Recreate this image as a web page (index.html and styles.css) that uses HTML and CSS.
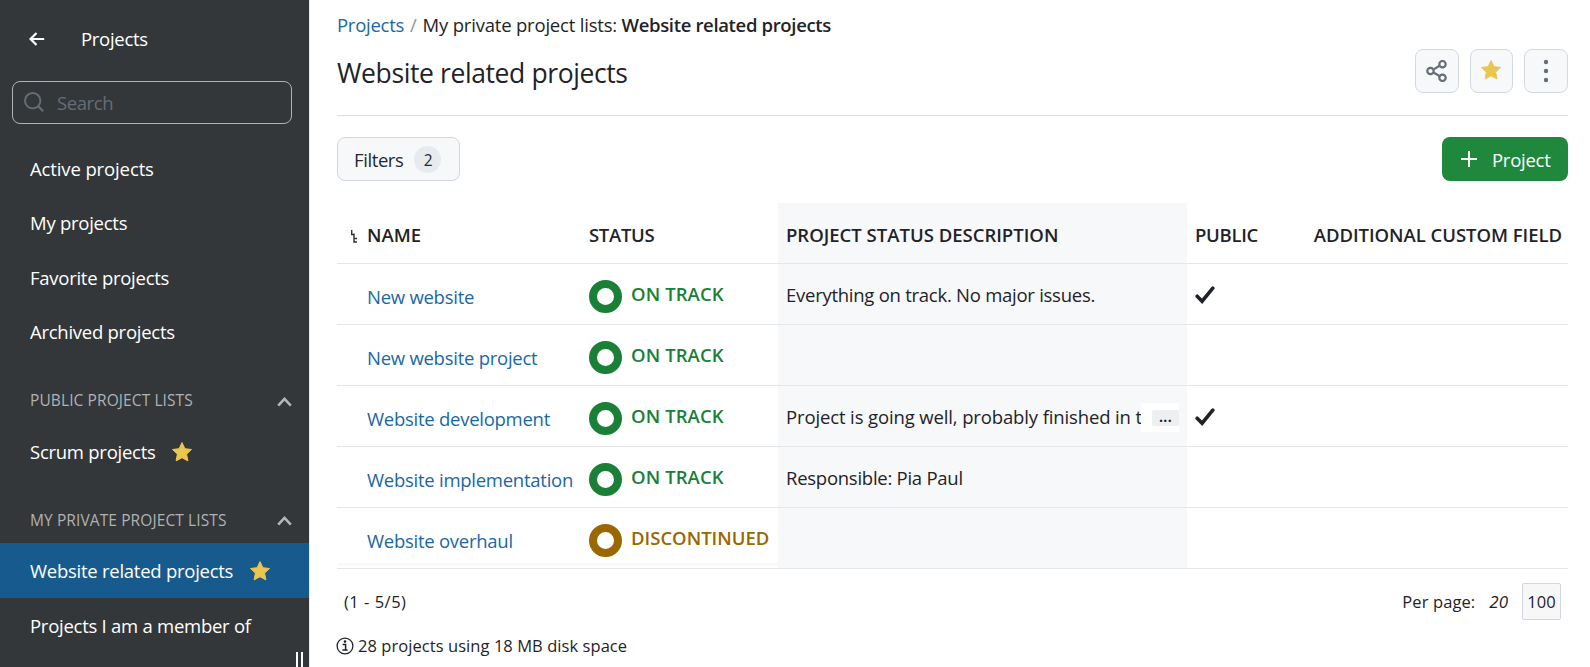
FILE: index.html
```html
<!DOCTYPE html>
<html lang="en">
<head>
<meta charset="utf-8">
<title>Website related projects</title>
<link rel="stylesheet" href="styles.css">
</head>
<body>
<svg class="defs" width="0" height="0" aria-hidden="true">
  <symbol id="star" viewBox="0 0 20 20"><path d="M10 .6l2.9 6.1 6.6.8-4.9 4.6 1.3 6.8-5.9-3.2-5.9 3.2 1.3-6.8L.5 7.5l6.6-.8z" fill="#eac54f" stroke="#eac54f" stroke-width="1" stroke-linejoin="round"/></symbol>
  <symbol id="chevron" viewBox="0 0 15 10"><path d="M1.2 8.7l6.3-6.8 6.3 6.8" fill="none" stroke="#b5b7b8" stroke-width="2.5"/></symbol>
  <symbol id="check" viewBox="0 0 20 18"><path d="M2.2 10.2l4.9 5L17.8 2.2" fill="none" stroke="#1f2328" stroke-width="3.6" stroke-linecap="round"/></symbol>
</svg>
<div class="app">
  <aside class="sidebar">
    <header class="side-head">
      <svg class="back" viewBox="0 0 16 14"><path d="M15.2 7H1.5M7.5 1L1.5 7l6 6" fill="none" stroke="#fff" stroke-width="2.2"/></svg>
      <span>Projects</span>
    </header>
    <label class="search">
      <svg viewBox="0 0 20 20"><circle cx="8.7" cy="8.7" r="7.7" fill="none" stroke="#656d76" stroke-width="1.9"/><path d="M14.2 14.2l5 5" stroke="#656d76" stroke-width="2.2"/></svg>
      <span>Search</span>
    </label>
    <nav class="menu">
      <a class="item">Active projects</a>
      <a class="item">My projects</a>
      <a class="item">Favorite projects</a>
      <a class="item">Archived projects</a>
      <div class="group">PUBLIC PROJECT LISTS<svg><use href="#chevron"/></svg></div>
      <a class="item">Scrum projects<svg class="star"><use href="#star"/></svg></a>
      <div class="group second">MY PRIVATE PROJECT LISTS<svg><use href="#chevron"/></svg></div>
      <a class="item active">Website related projects<svg class="star"><use href="#star"/></svg></a>
      <a class="item last">Projects I am a member of</a>
    </nav>
    <div class="resizer"></div>
  </aside>
  <main class="main">
    <div class="crumbs"><a>Projects</a><i>/</i><span>My private project lists: <b>Website related projects</b></span></div>
    <div class="title-row">
      <h1>Website related projects</h1>
      <div class="actions">
        <span class="btn"><svg width="22" height="22" viewBox="0 0 22 22" fill="none" stroke="#656d76" stroke-width="2.2"><path d="M8 9.1l6-3.6M8 12.8l6 3.6"/><circle cx="4.5" cy="11" r="3.2"/><circle cx="16.5" cy="4.2" r="3.2"/><circle cx="16.5" cy="17.8" r="3.2"/></svg></span>
        <span class="btn mid"><svg class="star"><use href="#star"/></svg></span>
        <span class="btn"><svg width="6" height="24" viewBox="0 0 6 24" fill="#656d76"><circle cx="3" cy="3" r="2.2"/><circle cx="3" cy="12" r="2.2"/><circle cx="3" cy="21" r="2.2"/></svg></span>
      </div>
    </div>
    <div class="toolbar">
      <span class="filters">Filters<em>2</em></span>
      <span class="create"><svg width="16" height="16" viewBox="0 0 16 16"><path d="M8 0v16M0 8h16" stroke="#fff" stroke-width="2"/></svg>Project</span>
    </div>
    <section class="table">
      <div class="row head">
        <span class="name"><svg class="tree" width="6" height="13" viewBox="0 0 6 13"><path d="M.7 0v4.5H3M3 3.5v8.5H6M3 8.5H6" fill="none" stroke="#2c3136" stroke-width="1.4"/></svg>NAME</span>
        <span>STATUS</span><span class="desc">PROJECT STATUS DESCRIPTION</span><span>PUBLIC</span><span class="field">ADDITIONAL CUSTOM FIELD</span>
      </div>
      <div class="row"><a class="name">New website</a><span class="status"><i></i>ON TRACK</span><span class="desc">Everything on track. No major issues.</span><span><svg class="check"><use href="#check"/></svg></span><span></span></div>
      <div class="row"><a class="name">New website project</a><span class="status"><i></i>ON TRACK</span><span class="desc"></span><span></span><span></span></div>
      <div class="row"><a class="name">Website development</a><span class="status"><i></i>ON TRACK</span><span class="desc"><span class="clip">Project is going well, probably finished in t</span><span class="more"><b>...</b></span></span><span><svg class="check"><use href="#check"/></svg></span><span></span></div>
      <div class="row"><a class="name">Website implementation</a><span class="status"><i></i>ON TRACK</span><span class="desc">Responsible: Pia Paul</span><span></span><span></span></div>
      <div class="row"><a class="name">Website overhaul</a><span class="status ended"><i></i>DISCONTINUED</span><span class="desc"></span><span></span><span></span></div>
      <div class="scrollbar"></div>
    </section>
    <div class="pager"><span class="range">(1 - 5/5)</span><span class="per">Per page:</span><em>20</em><span class="size">100</span></div>
    <div class="usage"><svg width="18" height="18" viewBox="0 0 18 18"><circle cx="9" cy="9" r="7.9" fill="none" stroke="#1f2328" stroke-width="1.3"/><path d="M6.6 7.5h3v5.2M6.4 13h5.2" fill="none" stroke="#1f2328" stroke-width="1.5"/><circle cx="9" cy="4.6" r="1.3" fill="#1f2328"/></svg>28 projects using 18 MB disk space</div>
  </main>
</div>
</body>
</html>
```
FILE: styles.css
```css
* { box-sizing: border-box; }
body {
  margin: 0;
  background: #fff;
  color: #1f2328;
  font: 18.5px/24px "Open Sans", "Noto Sans", sans-serif;
  letter-spacing: -0.26px;
}
svg { display: block; flex: none; }
.defs { position: absolute; }
.app { display: flex; height: 667px; overflow: hidden; white-space: nowrap; }

.sidebar { position: relative; flex: none; width: 310px; background: #333739; color: #fff; border-right: 1px solid #eaeaea; }
.side-head { display: flex; align-items: center; height: 81px; padding: 0 0 4px 29px; }
.side-head span { margin-left: 36px; letter-spacing: -0.3px; }
.back { width: 16px; height: 14px; margin-top: 1px; }
.search { display: flex; align-items: center; width: 280px; height: 43px; margin-left: 12px; padding-left: 11px; border: 1px solid #b0b2b3; border-radius: 8px; color: #656d76; }
.search svg { width: 20px; height: 20px; margin-top: -2px; }
.search span { margin-left: 13px; letter-spacing: -0.4px; }
.menu { padding-top: 18px; }
.item { display: flex; align-items: center; height: 54.25px; padding-left: 30px; }
.item:first-child { letter-spacing: -0.12px; }
.star { width: 20px; height: 20px; }
.item .star { margin-left: 16px; }
.active .star { margin-left: 17px; }
.group { display: flex; align-items: center; justify-content: space-between; height: 24px; margin: 29px 17px 13px 30px; color: #b0b2b3; font-size: 15.5px; letter-spacing: 0.1px; }
.group svg { width: 15px; height: 10px; margin-top: 4px; }
.group.second { margin-top: 29px; margin-bottom: 11px; }
.group.second svg { margin-top: 2px; }
.active { background: #175a8e; padding-top: 1px; }
.last { padding-top: 2px; }
.resizer { position: absolute; left: 296px; bottom: 0; width: 7px; height: 15px; border: solid #fff; border-width: 0 2px; }

.main { flex: 1; padding: 0 22px 0 27px; }
.crumbs { display: flex; height: 49px; padding-top: 13px; }
.crumbs a, a.name { color: #1a67a3; }
.crumbs i { margin: 0 6px; font-style: normal; color: #8c959f; }
.crumbs span { letter-spacing: -0.2px; }
.crumbs b { font-weight: 600; letter-spacing: -0.34px; }
.title-row { display: flex; justify-content: space-between; height: 67px; border-bottom: 1px solid #dcdfe2; }
h1 { margin: 0; font-size: 26.5px; line-height: 48px; font-weight: 400; letter-spacing: -0.39px; }
.actions { display: flex; gap: 11px; }
.btn { display: grid; place-items: center; width: 44px; height: 44px; border: 1px solid #d3d9e0; border-radius: 8px; background: #f6f8fa; }
.btn.mid { width: 43px; }
.btn.mid .star { margin: -2px 1px 0 0; }
.toolbar { display: flex; justify-content: space-between; height: 87px; padding-top: 21px; }
.filters, .create { display: flex; align-items: center; height: 44px; border-radius: 8px; }
.filters { width: 123px; padding: 2px 0 0 16px; border: 1px solid #d0d7de; background: #f6f8fa; color: #25292e; letter-spacing: -0.4px; }
.filters em { width: 27px; height: 27px; margin: -2px 0 0 11px; border-radius: 50%; background: #e7eaef; font-size: 15.5px; line-height: 28px; font-style: normal; text-align: center; }
.create { width: 126px; padding: 2px 0 0 19px; gap: 15px; background: #1f883d; color: #fff; }
.create svg { margin-top: -3px; }

.table { position: relative; }
.row { display: grid; grid-template-columns: 252px 189px 409px 64px 1fr; height: 61px; border-bottom: 1px solid #e4e6e8; }
.row > * { display: flex; align-items: center; }
.row > .name { padding: 5px 0 0 30px; }
.row > .desc { position: relative; padding: 2px 0 0 8px; background: #f6f8fa; }
.row > :nth-child(4) { padding-left: 8px; }
.row.head { font-weight: 600; letter-spacing: 0; }
.row.head > * { padding-top: 4px; }
.head .name .tree { margin: 2px 10px 0 -16px; }
.row > .field { justify-content: flex-end; padding-right: 6px; letter-spacing: -0.04px; }
.head > :nth-child(4) { letter-spacing: -0.3px; }
.head > :nth-child(2) { letter-spacing: -0.3px; }
.status { color: #1a7f37; font-weight: 600; letter-spacing: 0.1px; }
.status i { width: 33px; height: 33px; margin: 5px 9px 0 0; border: 8px solid currentColor; border-radius: 50%; }
.ended { color: #9a6700; letter-spacing: 0; }
.check { width: 20px; height: 18px; margin-top: 1px; }
.clip { width: 355px; overflow: hidden; letter-spacing: -0.13px; }
.more { position: absolute; right: 8px; top: 17px; display: flex; align-items: center; justify-content: flex-end; width: 38px; height: 29px; background: #fff; }
.more b { width: 27px; height: 16px; border-radius: 2px; background: #eeeff1; font-size: 14px; line-height: 14px; letter-spacing: 0.3px; text-align: center; }
.scrollbar { position: absolute; left: 0; bottom: 3px; width: 756px; height: 3px; background: #f8f8f9; }

.pager { display: flex; align-items: center; height: 64px; padding: 1px 7px 0; font-size: 16.5px; letter-spacing: 0; }
.range { flex: 1; letter-spacing: 0.5px; }
.per { letter-spacing: 0.1px; }
.pager em { margin: 0 14px; font-size: 17px; }
.size { width: 39px; height: 37px; border: 1px solid #d0d7de; border-radius: 2px; background: #f7f7f8; line-height: 36px; text-align: center; }
.usage { display: flex; align-items: center; gap: 4px; height: 26px; font-size: 16.5px; letter-spacing: 0.06px; }
.usage svg { margin-left: -1px; }
```
